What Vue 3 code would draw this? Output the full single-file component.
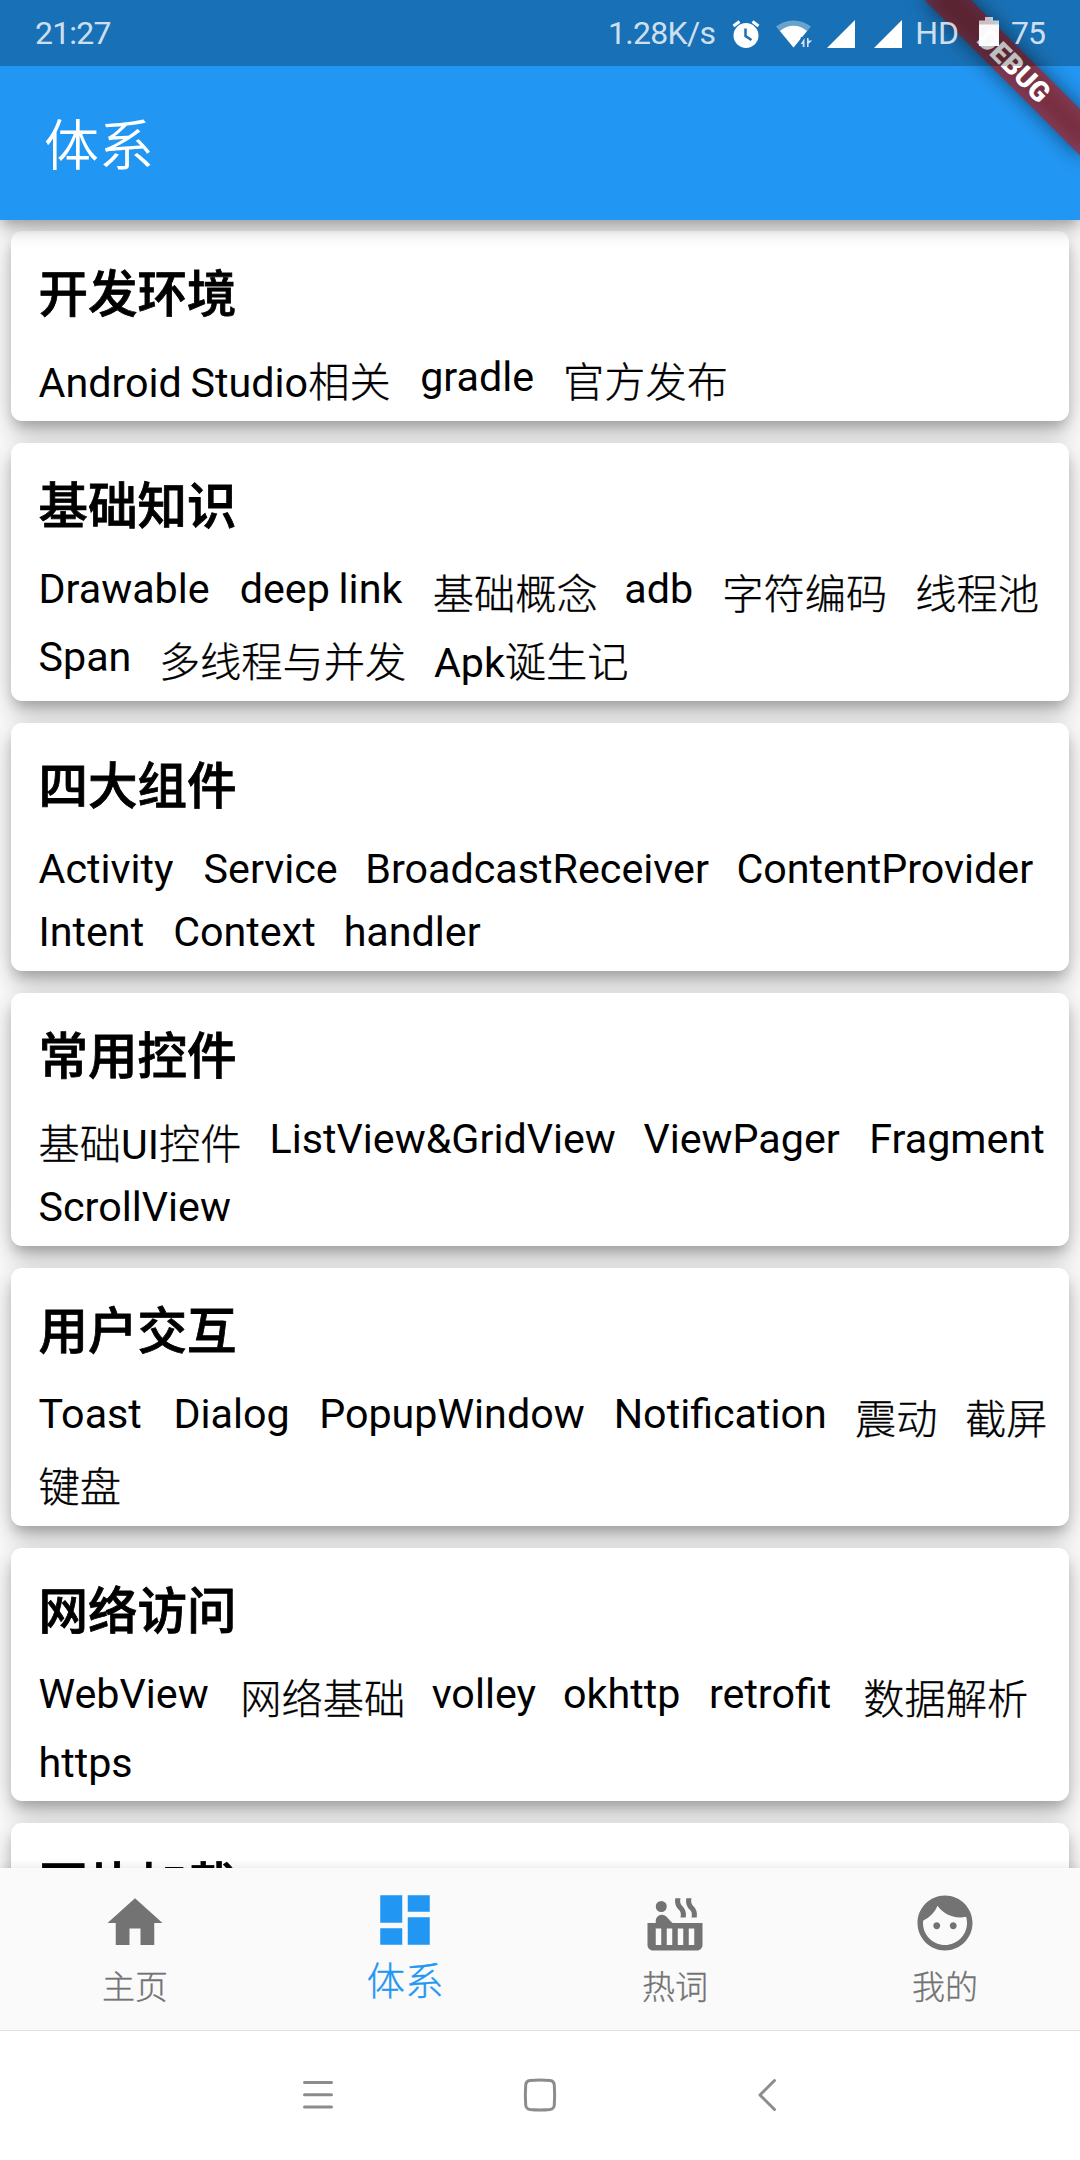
<script setup>
// Each item is [text, extra trailing space in px].
const groups = [
  { title: '开发环境', items: [['Android Studio相关', 2], ['gradle', 1.5], ['官方发布', 0]] },
  { title: '基础知识', items: [['Drawable', 2.5], ['deep link', 3], ['基础概念', -1], ['adb', 1.5], ['字符编码', 0.5], ['线程池', 0], ['Span', 0], ['多线程与并发', 0], ['Apk诞生记', 0]] },
  { title: '四大组件', items: [['Activity', 2.5], ['Service', 0], ['BroadcastReceiver', 0], ['ContentProvider', 0], ['Intent', 1.5], ['Context', 0.5], ['handler', 0]] },
  { title: '常用控件', items: [['基础UI控件', 0.5], ['ListView&GridView', 0], ['ViewPager', 2], ['Fragment', 0], ['ScrollView', 0]] },
  { title: '用户交互', items: [['Toast', 4], ['Dialog', 2], ['PopupWindow', 1.5], ['Notification', 0.5], ['震动', 0], ['截屏', 0], ['键盘', 0]] },
  { title: '网络访问', items: [['WebView', 4], ['网络基础', -1], ['volley', -0.5], ['okhttp', 1], ['retrofit', 4.5], ['数据解析', 0], ['https', 0]] },
  { title: '图片加载', items: [] },
]
const isCjk = (s) => /[\u4e00-\u9fff]/.test(s)
const runs = (s) => s.match(/[\u4e00-\u9fff]+|[^\u4e00-\u9fff]+/g)
const tabs = [
  { label: '主页', d: 'M10 20v-6h4v6h5v-8h3L12 3 2 12h3v8z' },
  { label: '体系', active: true, d: 'M3 13h8V3H3v10zm0 8h8v-6H3v6zm10 0h8V11h-8v10zm0-18v6h8V3h-8z' },
  { label: '热词', d: 'M11.15 12c-.31-.22-.59-.46-.82-.72l-1.4-1.55c-.19-.21-.43-.38-.69-.5-.31-.15-.65-.23-1-.23h-.03C6.01 9 5 10.01 5 11.25V12H2v8c0 1.1.9 2 2 2h16c1.1 0 2-.9 2-2v-8H11.15zM7 20H5v-6h2v6zm4 0H9v-6h2v6zm4 0h-2v-6h2v6zm4 0h-2v-6h2v6zm-.35-14.14l-.07-.07c-.57-.62-.82-1.41-.67-2.2L18 3h-1.89l-.06.43c-.2 1.36.27 2.71 1.3 3.72l.07.06c.57.62.82 1.41.67 2.2l-.11.59h1.91l.06-.43c.21-1.36-.27-2.71-1.3-3.71zm-4 0l-.07-.07c-.57-.62-.82-1.41-.67-2.2L14 3h-1.89l-.06.43c-.2 1.36.27 2.71 1.3 3.72l.07.06c.57.62.82 1.41.67 2.2l-.11.59h1.91l.06-.43c.21-1.36-.27-2.71-1.3-3.71zM7 4a2 2 0 1 0 0 4a2 2 0 1 0 0-4z' },
  { label: '我的', d: 'M9 11.75c-.69 0-1.25.56-1.25 1.25s.56 1.25 1.25 1.25 1.25-.56 1.25-1.25-.56-1.25-1.25-1.25zm6 0c-.69 0-1.25.56-1.25 1.25s.56 1.25 1.25 1.25 1.25-.56 1.25-1.25-.56-1.25-1.25-1.25zM12 2C6.48 2 2 6.48 2 12s4.48 10 10 10 10-4.48 10-10S17.52 2 12 2zm0 18c-4.41 0-8-3.59-8-8 0-.29.02-.58.05-.86 2.36-1.05 4.23-2.98 5.21-5.37C11.07 8.33 14.05 10 17.42 10c.78 0 1.53-.09 2.25-.26.21.71.33 1.47.33 2.26 0 4.41-3.59 8-8 8z' },
]
</script>

<template>
  <div class="screen">
    <header class="appbar">
      <h1>体系</h1>
    </header>

    <main class="list">
      <section v-for="g in groups" :key="g.title" class="card">
        <h2>{{ g.title }}</h2>
        <div class="items">
          <span
            v-for="[text, space] in g.items"
            :key="text"
            class="item"
            :class="{ tall: isCjk(text) }"
            :style="{ marginRight: space + 'px' }"
          ><span v-for="r in runs(text)" :key="r" :class="{ cjk: isCjk(r) }">{{ r }}</span></span>
        </div>
      </section>
    </main>

    <nav class="tabs">
      <div v-for="t in tabs" :key="t.label" class="tab" :class="{ active: t.active }">
        <svg viewBox="0 0 24 24"><path :d="t.d" /></svg>
        <span>{{ t.label }}</span>
      </div>
    </nav>

    <footer class="sysnav">
      <svg viewBox="0 0 1080 129" fill="none" stroke="#8c8c8c" stroke-width="3" stroke-linecap="round" stroke-linejoin="round">
        <path d="M304.500 51.500h27M304.500 63.700h27M304.500 76h27" />
        <path d="M530 49.500Q540 48.500 550 49.500Q554 50 554.300 54Q555 64 554.300 74Q554 78 550 78.500Q540 79.500 530 78.500Q526 78 525.700 74Q525 64 525.700 54Q526 50 530 49.500Z" />
        <path d="M774.500 49.500L760 64L774.500 78.500" />
      </svg>
    </footer>

    <div class="banner-clip">
      <div class="banner"><b>DEBUG</b></div>
    </div>

    <div class="status">
      <span class="time">21:27</span>
      <div class="right">
        <span class="speed">1.28K/s</span>
        <svg class="alarm" viewBox="0 0 28 28">
          <circle cx="14" cy="15.500" r="12.500" fill="#fff" />
          <path d="M1.500 6L7.500 1.500M26.500 6L20.500 1.500" stroke="#fff" stroke-width="3" fill="none" />
          <path d="M13.500 8.500v7.500l6 4" stroke="#1a70b6" stroke-width="2.500" fill="none" />
        </svg>
        <svg class="wifi" viewBox="0 0 36 28">
          <path d="M0 6.500C10-1.500 25-1.500 35 6.500L17.500 27.500Z" fill="#fff" opacity=".35" />
          <path d="M4 11C12 4 23 4 31 11L17.500 27.500Z" fill="#fff" />
          <path d="M25 17h12v12H22z" fill="#1a70b6" />
          <path d="M28.500 18v9h-1.800v-3H24.700zM31 18h1.600v2.500h3.600l-3.600 3.200V27H31z" fill="#fff" opacity=".8" />
        </svg>
        <svg class="sig" viewBox="0 0 28 28"><path d="M0 28L28 0V28Z" fill="#fff" /></svg>
        <svg class="sig sig2" viewBox="0 0 28 28"><path d="M0 28L28 0V28Z" fill="#fff" /></svg>
        <span class="hd">HD</span>
        <svg class="bat" viewBox="0 0 20 29">
          <path d="M6 0h8v3.500h6V8H0V3.500h6z" fill="#fff" opacity=".7" />
          <path d="M0 7.500h20V29H0z" fill="#fff" opacity=".97" />
        </svg>
        <span class="pct">75</span>
      </div>
    </div>
  </div>
</template>

<style>
body {
  margin: 0;
}
</style>

<style scoped>
.screen {
  position: relative;
  width: 1080px;
  height: 2160px;
  overflow: hidden;
  display: flex;
  flex-direction: column;
  background: #fafafa;
  font-family: Roboto, "Noto Sans CJK SC", sans-serif;
  color: #000;
}
.appbar {
  flex: none;
  box-sizing: border-box;
  height: 220px;
  padding: 71px 44px 0;
  display: flex;
  align-items: center;
  background: #2196f3;
  z-index: 2;
  position: relative;
  box-shadow: 0 5px 11px -3px rgba(0, 0, 0, .2), 0 11px 14px rgba(0, 0, 0, .14), 0 3px 27px rgba(0, 0, 0, .12);
}
h1 {
  margin: 0;
  font-size: 55px;
  line-height: 80px;
  font-weight: 350;
  color: #fff;
}
.list {
  flex: 1;
  min-height: 0;
  overflow: hidden;
  padding: 11px 11px 0;
}
.card {
  box-sizing: border-box;
  margin-bottom: 22px;
  padding: 28px 0 13.100px 27.500px;
  background: #fff;
  border-radius: 11px;
  box-shadow: 0 8px 12px -3px rgba(0, 0, 0, .2), 0 14px 22px rgba(0, 0, 0, .14), 0 3px 32px rgba(0, 0, 0, .12);
}
.card:last-child {
  height: 190px;
}
h2 {
  margin: 0;
  height: 94px;
  font-size: 49.500px;
  line-height: 72px;
  font-weight: 500;
  -webkit-text-stroke: .8px #000;
}
.items {
  display: flex;
  flex-wrap: wrap;
  gap: 14px 27.500px;
}
.item {
  height: 49.300px;
  font-size: 41.250px;
  line-height: 49px;
  white-space: nowrap;
  font-weight: 400;
  word-spacing: -1.500px;
}
.item.tall {
  height: 54.600px;
  line-height: 60px;
}
.cjk {
  font-weight: 300;
  -webkit-text-stroke: .3px #000;
}
.tabs {
  flex: none;
  position: relative;
  z-index: 2;
  height: 162px;
  display: flex;
  background: #fafafa;
  border-bottom: 1px solid #e0e0e0;
  box-shadow: 0 -1px 9px rgba(0, 0, 0, .1);
}
.tab {
  flex: 1;
  display: flex;
  flex-direction: column;
  align-items: center;
  padding-top: 22px;
  color: #737373;
  font-size: 33px;
  font-weight: 300;
}
.tab svg {
  width: 66px;
  height: 66px;
  fill: currentColor;
}
.tab span {
  line-height: 48px;
  margin-top: 8px;
  -webkit-text-stroke: .3px currentColor;
}
.tab.active {
  color: #2196f3;
  font-size: 38.500px;
  padding-top: 19px;
}
.tab.active span {
  margin-top: 5px;
}
.sysnav {
  flex: none;
  position: relative;
  z-index: 2;
  height: 129px;
  background: #fff;
}
.sysnav svg {
  display: block;
  width: 1080px;
  height: 129px;
}
.banner-clip {
  position: absolute;
  z-index: 3;
  top: 0;
  right: 0;
  width: 220px;
  height: 220px;
  overflow: hidden;
}
.banner {
  position: absolute;
  isolation: isolate;
  left: 110px;
  top: 77px;
  width: 220px;
  height: 33px;
  transform-origin: 110px -77px;
  transform: rotate(45deg);
  text-align: center;
  color: #fff;
  font-size: 28px;
  line-height: 33px;
}
.banner b {
  display: block;
  background: rgba(183, 28, 28, .63);
  font-weight: 900;
}
.banner::before {
  content: "";
  position: absolute;
  inset: 0;
  z-index: -1;
  background: rgba(0, 0, 0, .5);
  filter: blur(10px);
}
.status {
  position: absolute;
  z-index: 4;
  top: 0;
  left: 0;
  box-sizing: border-box;
  width: 1080px;
  height: 66px;
  padding: 1px 35px 0;
  display: flex;
  justify-content: space-between;
  align-items: center;
  background: rgba(0, 0, 0, .25);
  color: rgba(255, 255, 255, .8);
  font-size: 32px;
  line-height: 65px;
}
.time {
  letter-spacing: -.8px;
}
.right {
  display: flex;
  align-items: center;
}
.speed {
  letter-spacing: -.7px;
}
.alarm {
  width: 28px;
  height: 28px;
  margin-left: 17px;
}
.wifi {
  width: 36px;
  height: 28px;
  margin-left: 16px;
}
.sig {
  width: 28px;
  height: 28px;
  margin-left: 15px;
}
.sig2 {
  margin-left: 19px;
}
.hd {
  margin-left: 13px;
}
.bat {
  width: 20px;
  height: 29px;
  margin: -4px 0 0 20px;
}
.pct {
  margin-left: 12px;
  letter-spacing: -1px;
}
</style>
